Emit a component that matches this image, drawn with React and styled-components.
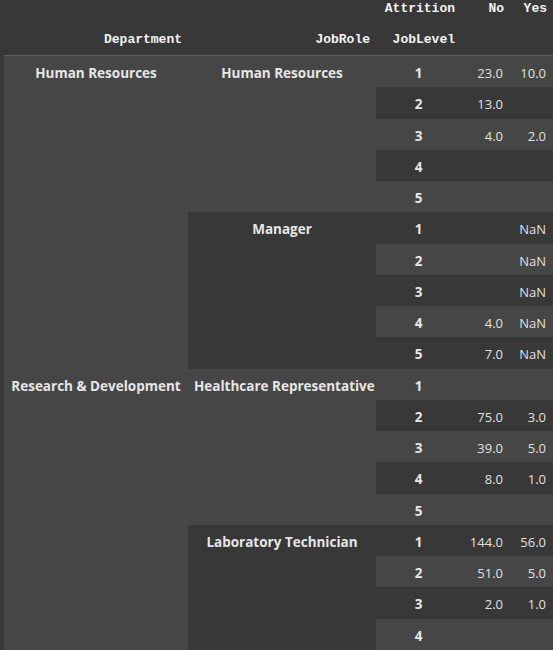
import React from "react";
import styled, { createGlobalStyle } from "styled-components";

const Global = createGlobalStyle`
  html, body { margin: 0; padding: 0; background: #383838; overflow: hidden; }
  body { width: 553px; height: 650px; }
`;

const Frame = styled.div`
  padding-left: 4px;
  background: #383838;
`;

const Table = styled.table`
  border-collapse: collapse;
  table-layout: fixed;
  width: 549px;
  margin-top: -7px;
  font-family: "Open Sans", "Noto Sans", sans-serif;
  font-size: 13px;
  color: #e2e2e2;
`;

const Head = styled.thead`
  border-bottom: 1px solid #5e5e5e;
`;

const HeadCell = styled.th`
  font-family: "Liberation Mono", "DejaVu Sans Mono", monospace;
  font-weight: bold;
  font-size: 13px;
  color: #f2f2f2;
  text-align: right;
  padding: 7px 6px;
  line-height: 17px;
  height: 31px;
  box-sizing: border-box;
  background: #383838;
  white-space: nowrap;
`;

const IndexCell = styled.th`
  font-weight: 700;
  font-size: 13.5px;
  text-align: center;
  vertical-align: top;
  padding: 9px 6px 5px;
  line-height: 17.25px;
  height: 31.25px;
  box-sizing: border-box;
  white-space: nowrap;
  color: #e6e6e6;
  background: ${(p) => (p.$light ? "#464646" : "#383838")};
`;

const DataCell = styled.td`
  text-align: right;
  vertical-align: top;
  padding: 9px 7px 5px;
  line-height: 17.25px;
  height: 31.25px;
  box-sizing: border-box;
  white-space: nowrap;
  color: #e0e0e0;
  background: ${(p) => (p.$light ? "#464646" : "#383838")};
`;

const fmt = (v) => (v === undefined ? "" : v === null ? "NaN" : v.toFixed(1));

const groups = [
  {
    dept: "Human Resources",
    roles: [
      {
        role: "Human Resources",
        rows: [
          [1, 23, 10],
          [2, 13, undefined],
          [3, 4, 2],
          [4, undefined, undefined],
          [5, undefined, undefined],
        ],
      },
      {
        role: "Manager",
        rows: [
          [1, undefined, null],
          [2, undefined, null],
          [3, undefined, null],
          [4, 4, null],
          [5, 7, null],
        ],
      },
    ],
  },
  {
    dept: "Research & Development",
    roles: [
      {
        role: "Healthcare Representative",
        rows: [
          [1, undefined, undefined],
          [2, 75, 3],
          [3, 39, 5],
          [4, 8, 1],
          [5, undefined, undefined],
        ],
      },
      {
        role: "Laboratory Technician",
        rows: [
          [1, 144, 56],
          [2, 51, 5],
          [3, 2, 1],
          [4, undefined, undefined],
        ],
      },
    ],
  },
];

export default function App() {
  const body = [];
  let idx = 0;
  groups.forEach((g) => {
    const deptSpan = g.roles.reduce((s, r) => s + r.rows.length, 0);
    g.roles.forEach((r, ri) => {
      r.rows.forEach((row, i) => {
        const light = idx % 2 === 0;
        body.push(
          <tr key={idx}>
            {ri === 0 && i === 0 && (
              <IndexCell rowSpan={deptSpan} $light={light}>
                {g.dept}
              </IndexCell>
            )}
            {i === 0 && (
              <IndexCell rowSpan={r.rows.length} $light={light}>
                {r.role}
              </IndexCell>
            )}
            <IndexCell $light={light}>{row[0]}</IndexCell>
            <DataCell $light={light}>{fmt(row[1])}</DataCell>
            <DataCell $light={light}>{fmt(row[2])}</DataCell>
          </tr>
        );
        idx++;
      });
    });
  });

  return (
    <Frame>
      <Global />
      <Table>
        <colgroup>
          <col style={{ width: 184 }} />
          <col style={{ width: 188 }} />
          <col style={{ width: 85 }} />
          <col style={{ width: 49 }} />
          <col style={{ width: 43 }} />
        </colgroup>
        <Head>
          <tr>
            <HeadCell />
            <HeadCell />
            <HeadCell>Attrition</HeadCell>
            <HeadCell>No</HeadCell>
            <HeadCell>Yes</HeadCell>
          </tr>
          <tr>
            <HeadCell>Department</HeadCell>
            <HeadCell>JobRole</HeadCell>
            <HeadCell>JobLevel</HeadCell>
            <HeadCell />
            <HeadCell />
          </tr>
        </Head>
        <tbody>{body}</tbody>
      </Table>
    </Frame>
  );
}
